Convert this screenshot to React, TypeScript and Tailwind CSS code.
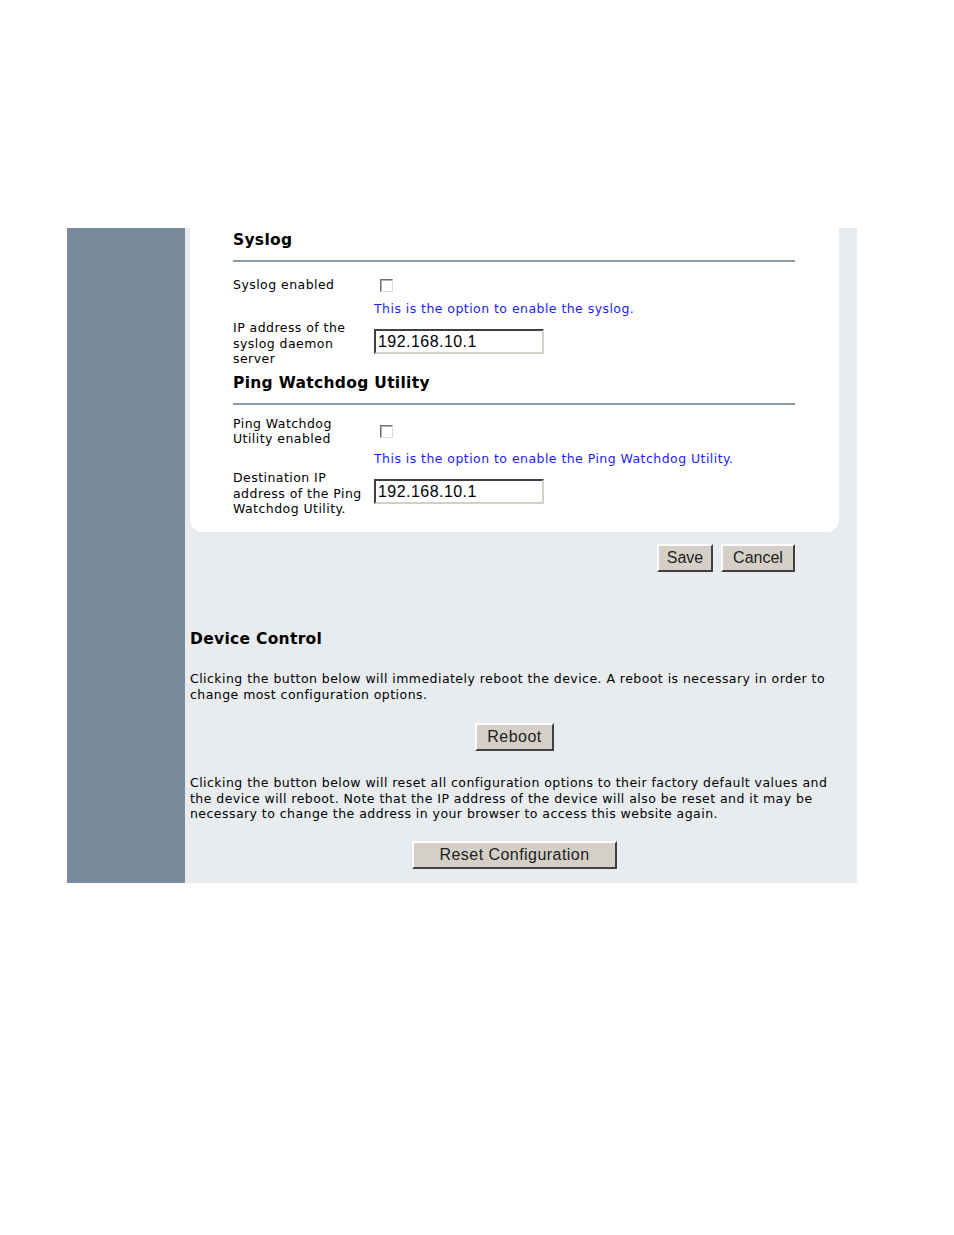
const verdana = "font-['DejaVu_Sans',Verdana,sans-serif]";
const arial = "font-['Liberation_Sans',Arial,sans-serif]";

function Checkbox() {
  return (
    <span className="inline-block h-[13px] w-[13px] border border-t-[#6f6f6f] border-l-[#6f6f6f] border-r-[#dcdcdc] border-b-[#dcdcdc] bg-white shadow-[inset_1px_1px_0_#b0b0b0]" />
  );
}

function TextInput({ value }: { value: string }) {
  return (
    <div
      className={`flex h-[25px] w-[170px] items-center border-2 border-t-[#404040] border-l-[#404040] border-r-[#d4d0c8] border-b-[#d4d0c8] bg-white pl-[2px] text-[16px] text-black ${arial}`}
    >
      {value}
    </div>
  );
}

function Btn({ label, w }: { label: string; w: string }) {
  return (
    <button
      className={`flex h-[28px] ${w} items-center justify-center border-2 border-t-white border-l-white border-r-[#404040] border-b-[#404040] bg-[#d4d0c8] text-[16px] text-[#222] ${arial}`}
    >
      {label}
    </button>
  );
}

function SectionTitle({ title }: { title: string }) {
  return (
    <div>
      <div className="h-[22px] text-[15.5px] font-bold leading-[22px] tracking-[0.3px] text-black">{title}</div>
      <div className="mt-[9px] h-[2px] bg-[#8a9aab]" />
    </div>
  );
}

export default function App() {
  return (
    <div className={`min-h-[1235px] bg-white pt-[228px] ${verdana}`}>
      <div className="ml-[67px] flex h-[655px] w-[790px]">
        <div className="w-[118px] bg-[#7a8b9c]" />
        <div className="flex-1 bg-[#e8ecef] pl-[5px] pr-[18px]">
          {/* settings card */}
          <div className="h-[304px] rounded-b-[12px] bg-white pl-[43px] pr-[44px] pt-[1px] text-[12.5px] tracking-[0.45px] text-black">
            <SectionTitle title="Syslog" />
            <div className="mt-[15px] flex items-center">
              <div className="w-[141px] leading-[15.5px]">Syslog enabled</div>
              <div className="flex pl-[6px] pt-[2px]">
                <Checkbox />
              </div>
            </div>
            <div className="ml-[141px] mt-[8px] leading-[15.5px] text-[#1c1cf5]">
              This is the option to enable the syslog.
            </div>
            <div className="mt-[4px] flex">
              <div className="w-[141px] leading-[15.5px]">
                IP address of the
                <br />
                syslog daemon
                <br />
                server
              </div>
              <div className="pt-[9px]">
                <TextInput value="192.168.10.1" />
              </div>
            </div>
            <div className="mt-[5px]">
              <SectionTitle title="Ping Watchdog Utility" />
            </div>
            <div className="mt-[11px] flex items-center">
              <div className="w-[141px] leading-[15.5px]">
                Ping Watchdog
                <br />
                Utility enabled
              </div>
              <div className="flex pl-[6px] pt-[1px]">
                <Checkbox />
              </div>
            </div>
            <div className="ml-[141px] mt-[4px] leading-[15.5px] text-[#1c1cf5]">
              This is the option to enable the Ping Watchdog Utility.
            </div>
            <div className="mt-[4px] flex">
              <div className="w-[141px] leading-[15.5px]">
                Destination IP
                <br />
                address of the Ping
                <br />
                Watchdog Utility.
              </div>
              <div className="pt-[9px]">
                <TextInput value="192.168.10.1" />
              </div>
            </div>
          </div>

          {/* save / cancel */}
          <div className="mt-[12px] flex justify-end gap-[8px] pr-[44px]">
            <Btn label="Save" w="w-[56px]" />
            <Btn label="Cancel" w="w-[74px]" />
          </div>

          {/* device control */}
          <div className="mt-[56px] text-[12.5px] tracking-[0.45px] text-black">
            <div className="h-[22px] text-[15.5px] font-bold leading-[22px] tracking-[0.3px]">Device Control</div>
            <p className="mt-[21px] leading-[15.5px]">
              Clicking the button below will immediately reboot the device. A reboot is necessary in order to change
              most configuration options.
            </p>
            <div className="mt-[21px] flex justify-center">
              <Btn label="Reboot" w="w-[79px]" />
            </div>
            <p className="mt-[24px] leading-[15.5px]">
              Clicking the button below will reset all configuration options to their factory default values and the
              device will reboot. Note that the IP address of the device will also be reset and it may be necessary to
              change the address in your browser to access this website again.
            </p>
            <div className="mt-[19px] flex justify-center">
              <Btn label="Reset Configuration" w="w-[205px]" />
            </div>
          </div>
        </div>
      </div>
    </div>
  );
}
